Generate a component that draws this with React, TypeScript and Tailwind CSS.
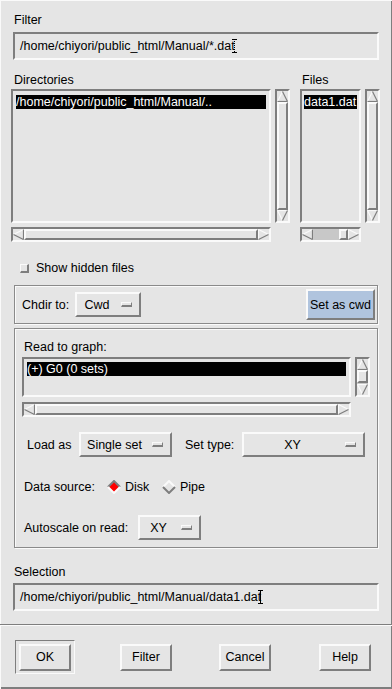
import React from 'react'

const sunken = 'border-2 border-t-[#7e7e7e] border-l-[#7e7e7e] border-r-[#fafafa] border-b-[#fafafa]'
const raised = 'border-2 border-t-[#fafafa] border-l-[#fafafa] border-r-[#7e7e7e] border-b-[#7e7e7e]'
const etched = 'border border-[#8a8a8a] shadow-[inset_1px_1px_0_#fafafa,1px_1px_0_#fafafa]'

type Dir = 'up' | 'down' | 'left' | 'right'

function Arrow({ dir }: { dir: Dir }) {
    const lt = '#fafafa'
    const dk = '#7e7e7e'
    let lines: [number, number, number, number, string][] = []
    let pts = ''
    if (dir === 'up') {
        pts = '5.5,0.5 10.5,10.5 0.5,10.5'
        lines = [[0.5, 10.5, 5.5, 0.5, lt], [5.5, 0.5, 10.5, 10.5, dk], [0.5, 10.5, 10.5, 10.5, dk]]
    } else if (dir === 'down') {
        pts = '0.5,0.5 10.5,0.5 5.5,10.5'
        lines = [[0.5, 0.5, 10.5, 0.5, lt], [0.5, 0.5, 5.5, 10.5, lt], [10.5, 0.5, 5.5, 10.5, dk]]
    } else if (dir === 'left') {
        pts = '0.5,5.5 10.5,0.5 10.5,10.5'
        lines = [[0.5, 5.5, 10.5, 0.5, lt], [0.5, 5.5, 10.5, 10.5, dk], [10.5, 0.5, 10.5, 10.5, dk]]
    } else {
        pts = '0.5,0.5 10.5,5.5 0.5,10.5'
        lines = [[0.5, 0.5, 0.5, 10.5, lt], [0.5, 0.5, 10.5, 5.5, lt], [0.5, 10.5, 10.5, 5.5, dk]]
    }
    return (
        <svg width="11" height="11" viewBox="0 0 11 11" className='shrink-0 block'>
            <polygon points={pts} fill="#e5e5e5" />
            {lines.map((l, i) => (
                <line key={i} x1={l[0]} y1={l[1]} x2={l[2]} y2={l[3]} stroke={l[4]} strokeWidth="1.2" />
            ))}
        </svg>
    )
}

function VScroll({ h, thumb }: { h: string; thumb?: boolean }) {
    return (
        <div className={`${sunken} ${h} w-[15px] flex flex-col shrink-0`}>
            <Arrow dir="up" />
            {thumb ? (
                <>
                    <div className={`${raised} h-[13px]`} />
                    <div className='flex-1 bg-[#c8c8c8]' />
                </>
            ) : (
                <div className={`${raised} flex-1`} />
            )}
            <Arrow dir="down" />
        </div>
    )
}

function HScroll({ w, small }: { w: string; small?: boolean }) {
    return (
        <div className={`${sunken} ${w} h-[15px] flex items-stretch shrink-0`}>
            <Arrow dir="left" />
            {small ? (
                <>
                    <div className='flex-1 bg-[#c8c8c8]' />
                    <div className={`${raised} w-[9px]`} />
                </>
            ) : (
                <div className={`${raised} flex-1`} />
            )}
            <Arrow dir="right" />
        </div>
    )
}

function OptionMenu({ label, w }: { label: string; w: string }) {
    return (
        <div className={`${raised} ${w} h-[25px] flex items-center pl-[0px] pr-[7px]`}>
            <span className='flex-1 text-center'>{label}</span>
            <span className='ml-[4px] w-[11px] h-[5px] border border-t-[#fafafa] border-l-[#fafafa] border-r-[#7e7e7e] border-b-[#7e7e7e] border-b-2' />
        </div>
    )
}

function IBeam({ dotted }: { dotted?: boolean }) {
    return (
        <svg width="5" height="14" viewBox="0 0 5 14" className='block -ml-[3px]'>
            <line x1="0" y1="0.5" x2="5" y2="0.5" stroke="#000" />
            <line x1="0" y1="13.5" x2="5" y2="13.5" stroke="#000" />
            <line x1="2.5" y1="0" x2="2.5" y2="14" stroke="#000" strokeDasharray={dotted ? '1 1' : undefined} />
        </svg>
    )
}

function Diamond({ on }: { on?: boolean }) {
    const a = on ? '#7e7e7e' : '#fafafa'
    const b = on ? '#fafafa' : '#7e7e7e'
    return (
        <svg width="14" height="14" viewBox="0 0 14 14" className='block shrink-0'>
            <polygon points="7,1 13,7 7,13 1,7" fill={on ? '#ff0000' : '#e5e5e5'} />
            <polyline points="1,7 7,1 13,7" fill="none" stroke={a} strokeWidth="2" />
            <polyline points="1,7 7,13 13,7" fill="none" stroke={b} strokeWidth="2" />
        </svg>
    )
}

function PushButton({ label, className = '' }: { label: string; className?: string }) {
    return (
        <div className={`${raised} w-[52px] h-[27px] flex items-center justify-center ${className}`}>
            {label}
        </div>
    )
}

function App() {
    return (
        <div className="w-[392px] h-[689px] bg-[#e5e5e5] shadow-[inset_1px_1px_0_#fafafa,inset_-1px_-2px_0_#7e7e7e] flex flex-col text-[12.5px] leading-[14px] text-black font-['Liberation_Sans',Arial,sans-serif] overflow-hidden">
            {/* filter */}
            <div className='ml-[14px] mt-[13px] h-[14px]'>Filter</div>
            <div className={`${sunken} ml-[13px] mt-[5px] w-[366px] h-[28px] flex items-center pl-[5px]`}>
                <span>/home/chiyori/public_html/Manual/*.dat</span>
                <IBeam dotted />
            </div>

            {/* directories / files */}
            <div className='flex ml-[14px] mt-[13px] h-[14px]'>
                <div className='w-[288px]'>Directories</div>
                <div>Files</div>
            </div>
            <div className='flex ml-[11px] mt-[2px]'>
                <div className={`${sunken} w-[260px] h-[134px] pt-[4px] px-[3px]`}>
                    <div className='bg-black text-white h-[14px] whitespace-nowrap overflow-hidden'>/home/chiyori/public_html/Manual/..</div>
                </div>
                <div className='ml-[4px]'><VScroll h='h-[134px]' /></div>
                <div className={`${sunken} ml-[10px] w-[61px] h-[134px] pt-[4px] px-[2px]`}>
                    <div className='bg-black text-white h-[14px] whitespace-nowrap overflow-hidden'>data1.dat</div>
                </div>
                <div className='ml-[4px]'><VScroll h='h-[134px]' /></div>
            </div>
            <div className='flex ml-[11px] mt-[4px]'>
                <HScroll w='w-[260px]' />
                <div className='ml-[29px]'><HScroll w='w-[61px]' small /></div>
            </div>

            {/* hidden files toggle */}
            <div className='flex items-center ml-[20px] mt-[19px] h-[14px]'>
                <span className='w-[9px] h-[9px] border border-t-[#fafafa] border-l-[#fafafa] border-r-[#7e7e7e] border-b-[#7e7e7e] border-r-2 border-b-2' />
                <span className='ml-[7px]'>Show hidden files</span>
            </div>

            {/* chdir panel */}
            <div className={`${etched} ml-[14px] mt-[10px] w-[364px] h-[39px] flex items-center pl-[7px] pr-[2px]`}>
                <span className='w-[53px]'>Chdir to:</span>
                <OptionMenu label='Cwd' w='w-[66px]' />
                <div className={`${raised} ml-auto w-[69px] h-[31px] bg-[#b0c4de] flex items-center justify-center`}>Set as cwd</div>
            </div>

            {/* read panel */}
            <div className={`${etched} ml-[14px] mt-[4px] w-[364px] h-[220px] flex flex-col`}>
                <div className='ml-[9px] mt-[11px] h-[14px]'>Read to graph:</div>
                <div className='flex ml-[7px] mt-[3px]'>
                    <div className={`${sunken} w-[329px] h-[40px] pt-[3px] px-[3px]`}>
                        <div className='bg-black text-white h-[14px] whitespace-nowrap'>(+) G0 (0 sets)</div>
                    </div>
                    <div className='ml-[4px]'><VScroll h='h-[40px]' thumb /></div>
                </div>
                <div className='ml-[7px] mt-[5px]'><HScroll w='w-[329px]' /></div>

                <div className='flex items-center ml-[12px] mt-[15px]'>
                    <span className='w-[52px]'>Load as</span>
                    <OptionMenu label='Single set' w='w-[93px]' />
                    <span className='ml-[13px] w-[57px]'>Set type:</span>
                    <OptionMenu label='XY' w='w-[123px]' />
                </div>

                <div className='flex items-center ml-[9px] mt-[23px] h-[14px]'>
                    <span className='w-[83px]'>Data source:</span>
                    <Diamond on />
                    <span className='ml-[4px] w-[37px]'>Disk</span>
                    <Diamond />
                    <span className='ml-[4px]'>Pipe</span>
                </div>

                <div className='flex items-center ml-[9px] mt-[21px]'>
                    <span className='w-[114px]'>Autoscale on read:</span>
                    <OptionMenu label='XY' w='w-[63px]' />
                </div>
            </div>

            {/* selection */}
            <div className='ml-[14px] mt-[17px] h-[14px]'>Selection</div>
            <div className={`${sunken} ml-[13px] mt-[4px] w-[366px] h-[28px] flex items-center pl-[5px]`}>
                <span>/home/chiyori/public_html/Manual/data1.dat</span>
                <IBeam />
            </div>

            <div className='mt-[13px] h-[1px] bg-[#7e7e7e]' />
            <div className='h-[1px] bg-[#fafafa]' />

            {/* action buttons */}
            <div className='flex items-center mt-[14px]'>
                <div className='ml-[15px] w-[60px] h-[34px] border border-t-[#7e7e7e] border-l-[#7e7e7e] border-r-[#fafafa] border-b-[#fafafa] flex items-center justify-center'>
                    <PushButton label='OK' />
                </div>
                <PushButton label='Filter' className='ml-[45px]' />
                <PushButton label='Cancel' className='ml-[47px]' />
                <PushButton label='Help' className='ml-[48px]' />
            </div>
        </div>
    )
}

export default App
